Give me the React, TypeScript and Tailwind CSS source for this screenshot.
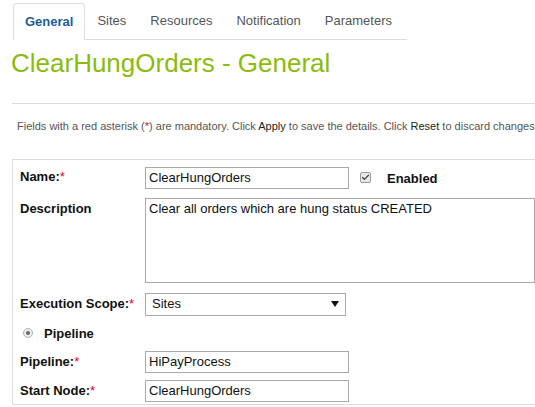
import { Check } from "lucide-react";

const tabs = ["General", "Sites", "Resources", "Notification", "Parameters"];

function Req() {
  return <span className="text-[#e4002b] font-normal">*</span>;
}

function Label({ children, req }: { children: React.ReactNode; req?: boolean }) {
  return (
    <div className="w-[125px] shrink-0 text-[13px] font-bold text-[#111]">
      {children}
      {req ? ":" : ""}
      {req ? <Req /> : null}
    </div>
  );
}

function TextInput({ value }: { value: string }) {
  return (
    <div className="w-[204px] h-[22px] border border-[#a9a9a9] bg-white px-[3px] text-[13px] leading-[20px] text-[#111]">
      {value}
    </div>
  );
}

export default function App() {
  return (
    <div className="w-[535px] h-[407px] overflow-hidden bg-white font-['Liberation_Sans',Arial,sans-serif]">
      {/* tabs */}
      <div className="flex items-end pl-[13px] pt-[3px] w-[407px]">
        {tabs.map((t, i) =>
          i === 0 ? (
            <div
              key={t}
              className="h-[37px] px-[11px] flex items-center border border-b-0 border-[#ddd] rounded-t-[4px] text-[13px] font-bold text-[#1e5b9a]"
            >
              {t}
            </div>
          ) : (
            <div
              key={t}
              className="h-[37px] flex items-center px-[12px] border-b border-[#ddd] text-[13px] text-[#555]"
            >
              {t}
            </div>
          )
        )}
        <div className="flex-1 h-[37px] border-b border-[#ddd]" />
      </div>

      <h1 className="pl-[11px] mt-[7px] text-[26px] leading-[32px] text-[#8bbb0c]">
        ClearHungOrders - General
      </h1>

      <div className="ml-[12px] mt-[24px] border-t border-[#ddd]" />

      <p className="pl-[17px] mt-[14px] whitespace-nowrap overflow-hidden text-[11px] text-[#555]">
        Fields with a red asterisk (<span className="text-[#e4002b]">*</span>) are mandatory. Click{" "}
        <span className="text-[#222]">Apply</span> to save the details. Click{" "}
        <span className="text-[#222]">Reset</span> to discard changes.
      </p>

      {/* form */}
      <div className="ml-[12px] mt-[24px] border-l border-t border-b border-[#ddd] pl-[7px] pt-[7px] pb-[2px] flex flex-col gap-[10px]">
        <div className="flex items-start">
          <Label req>Name</Label>
          <TextInput value="ClearHungOrders" />
          <div className="ml-[11px] mt-[5px] w-[11px] h-[11px] border border-[#9a9a9a] rounded-[2px] bg-[#e8e8e8] flex items-center justify-center">
            <Check size={9} strokeWidth={3.5} className="text-[#444]" />
          </div>
          <span className="ml-[16px] mt-[2px] text-[13px] font-bold text-[#111]">Enabled</span>
        </div>

        <div className="flex items-start -mt-[1px]">
          <div className="w-[125px] shrink-0 text-[13px] font-bold text-[#111] pt-[1px]">Description</div>
          <div className="w-[400px] h-[85px] border border-[#a9a9a9] px-[3px] text-[13px] leading-[20px] text-[#111]">
            Clear all orders which are hung status CREATED
          </div>
        </div>

        <div className="flex items-center">
          <Label req>Execution Scope</Label>
          <div className="w-[201px] h-[23px] border border-[#a9a9a9] flex items-center justify-between px-[6px] text-[13px] text-[#111]">
            <span>Sites</span>
            <svg width="8" height="6" viewBox="0 0 8 6">
              <path d="M0 0H8L4 6Z" fill="#111" />
            </svg>
          </div>
        </div>

        <div className="flex items-center pl-[3px] -mt-[2px]">
          <div className="w-[10px] h-[10px] rounded-full border border-[#b0b0b0] bg-[#eee] flex items-center justify-center">
            <div className="w-[4px] h-[4px] rounded-full bg-[#666]" />
          </div>
          <span className="ml-[11px] text-[13px] font-bold text-[#111]">Pipeline</span>
        </div>

        <div className="flex items-center -mt-[2px]">
          <Label req>Pipeline</Label>
          <TextInput value="HiPayProcess" />
        </div>

        <div className="flex items-center -mt-[3px]">
          <Label req>Start Node</Label>
          <TextInput value="ClearHungOrders" />
        </div>
      </div>
    </div>
  );
}
